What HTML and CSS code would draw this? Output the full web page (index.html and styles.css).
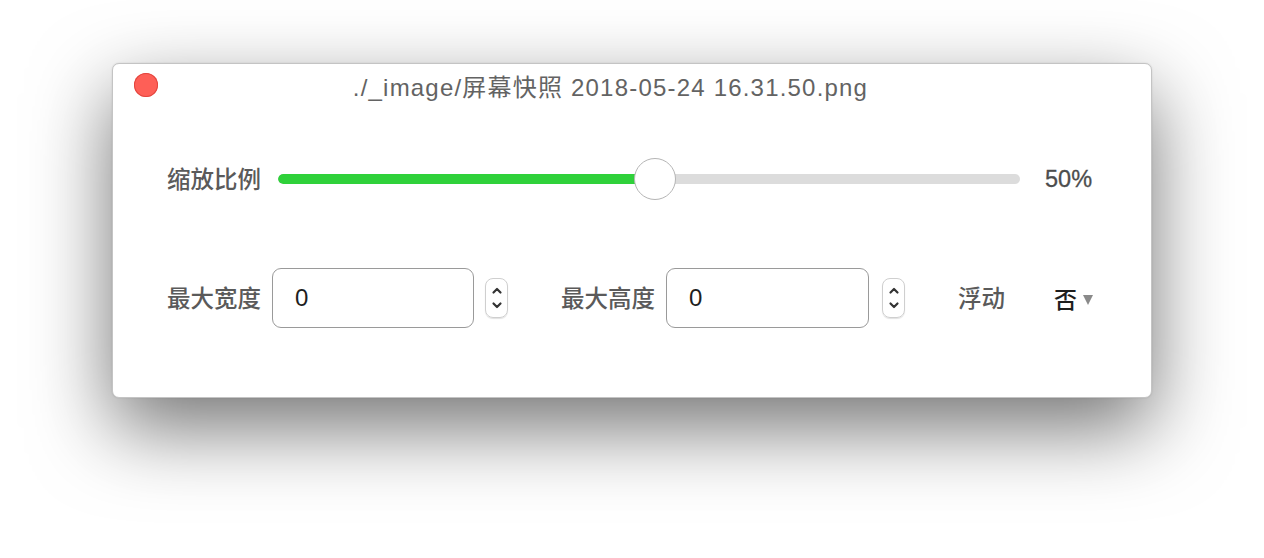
FILE: index.html
```html
<!DOCTYPE html>
<html lang="zh">
<head>
<meta charset="utf-8">
<link rel="stylesheet" href="styles.css">
</head>
<body>
<div class="window">
  <div class="titlebar">
    <span class="close"></span>
    <div class="title">./_image/屏幕快照 2018-05-24 16.31.50.png</div>
  </div>
  <div class="row row-scale">
    <span class="label">缩放比例</span>
    <div class="slider">
      <div class="track"><div class="fill" style="width:50.8%"></div></div>
      <span class="thumb" style="left:50.8%"></span>
    </div>
    <span class="value">50%</span>
  </div>
  <div class="row row-size">
    <span class="label">最大宽度</span>
    <div class="input">0</div>
    <span class="stepper">
      <svg width="12" height="30" viewBox="0 0 12 30"><path d="M2.5 9.5 L6 6 L9.5 9.5" fill="none" stroke="#333" stroke-width="2.2" stroke-linecap="round" stroke-linejoin="round"/><path d="M2.5 20.5 L6 24 L9.5 20.5" fill="none" stroke="#333" stroke-width="2.2" stroke-linecap="round" stroke-linejoin="round"/></svg>
    </span>
    <span class="label label-h">最大高度</span>
    <div class="input input-h">0</div>
    <span class="stepper stepper-h">
      <svg width="12" height="30" viewBox="0 0 12 30"><path d="M2.5 9.5 L6 6 L9.5 9.5" fill="none" stroke="#333" stroke-width="2.2" stroke-linecap="round" stroke-linejoin="round"/><path d="M2.5 20.5 L6 24 L9.5 20.5" fill="none" stroke="#333" stroke-width="2.2" stroke-linecap="round" stroke-linejoin="round"/></svg>
    </span>
    <span class="label label-float">浮动</span>
    <span class="select">否<span class="caret"></span></span>
  </div>
</div>
</body>
</html>
```
FILE: styles.css
```css
html, body {
  margin: 0;
  background: #fff;
}
body {
  width: 1264px;
  height: 558px;
  overflow: hidden;
  padding: 63px 0 0 112px;
  box-sizing: border-box;
  font-family: "Liberation Sans", "Noto Sans CJK SC", sans-serif;
}
.window {
  width: 1040px;
  height: 335px;
  box-sizing: border-box;
  background: #fff;
  border-radius: 7px;
  border: 1px solid #c4c4c4;
  box-shadow: 0 30px 80px rgba(0, 0, 0, 0.55), 0 0 2px rgba(0, 0, 0, 0.12);
}
.titlebar {
  display: flex;
  align-items: center;
  padding: 0 88px 0 21px;
  height: 42px;
}
.close {
  width: 24px;
  height: 24px;
  border-radius: 50%;
  background: #fe5f57;
  box-shadow: inset 0 0 0 1px #e2463f;
  flex: none;
}
.title {
  flex: 1;
  text-align: center;
  font-size: 24px;
  letter-spacing: 1.2px;
  color: #636363;
  font-family: "Liberation Sans", "Noto Sans CJK SC", sans-serif;
}
.row {
  display: flex;
  align-items: center;
  padding-left: 54px;
}
.label {
  font-family: "Noto Sans CJK SC", sans-serif;
  font-size: 23.5px;
  font-weight: 500;
  color: #5a5a5a;
  line-height: 1;
  flex: none;
}
.row-scale {
  margin-top: 52px;
  height: 42px;
}
.slider {
  position: relative;
  width: 742px;
  height: 42px;
  margin-left: 17px;
  display: flex;
  align-items: center;
}
.track {
  width: 100%;
  height: 10px;
  border-radius: 5px;
  background: #dcdcdc;
  overflow: hidden;
}
.fill {
  height: 100%;
  background: #2fd13a;
  border-radius: 5px 0 0 5px;
}
.thumb {
  position: absolute;
  top: 0;
  width: 40px;
  height: 40px;
  margin-left: -21px;
  border-radius: 50%;
  background: #fff;
  border: 1px solid #b5b5b5;
}
.value {
  margin-left: 25px;
  font-size: 23.5px;
  color: #4d4d4d;
  -webkit-text-stroke: 0.3px #4d4d4d;
}
.row-size {
  margin-top: 68px;
  height: 60px;
}
.input {
  width: 202px;
  height: 60px;
  box-sizing: border-box;
  border: 1px solid #9a9a9a;
  border-radius: 9px;
  margin-left: 11px;
  padding-left: 22px;
  display: flex;
  align-items: center;
  font-size: 24px;
  color: #1e1e1e;
}
.input-h {
  width: 203px;
}
.stepper {
  width: 23px;
  height: 40px;
  box-sizing: border-box;
  border: 1px solid #cfcfcf;
  border-radius: 8px;
  margin-left: 11px;
  box-shadow: 0 1px 1px rgba(0, 0, 0, 0.12);
  display: flex;
  align-items: center;
  justify-content: center;
}
.stepper-h {
  margin-left: 13px;
}
.label-h {
  margin-left: 53px;
}
.label-float {
  margin-left: 53px;
}
.select {
  margin-left: 49px;
  font-family: "Noto Sans CJK SC", sans-serif;
  font-size: 23px;
  font-weight: 500;
  color: #1e1e1e;
  display: flex;
  align-items: center;
  line-height: 1;
}
.caret {
  margin-left: 6px;
  margin-top: 4px;
  width: 0;
  height: 0;
  border-left: 5px solid transparent;
  border-right: 5px solid transparent;
  border-top: 10px solid #8a8a8a;
}
```
